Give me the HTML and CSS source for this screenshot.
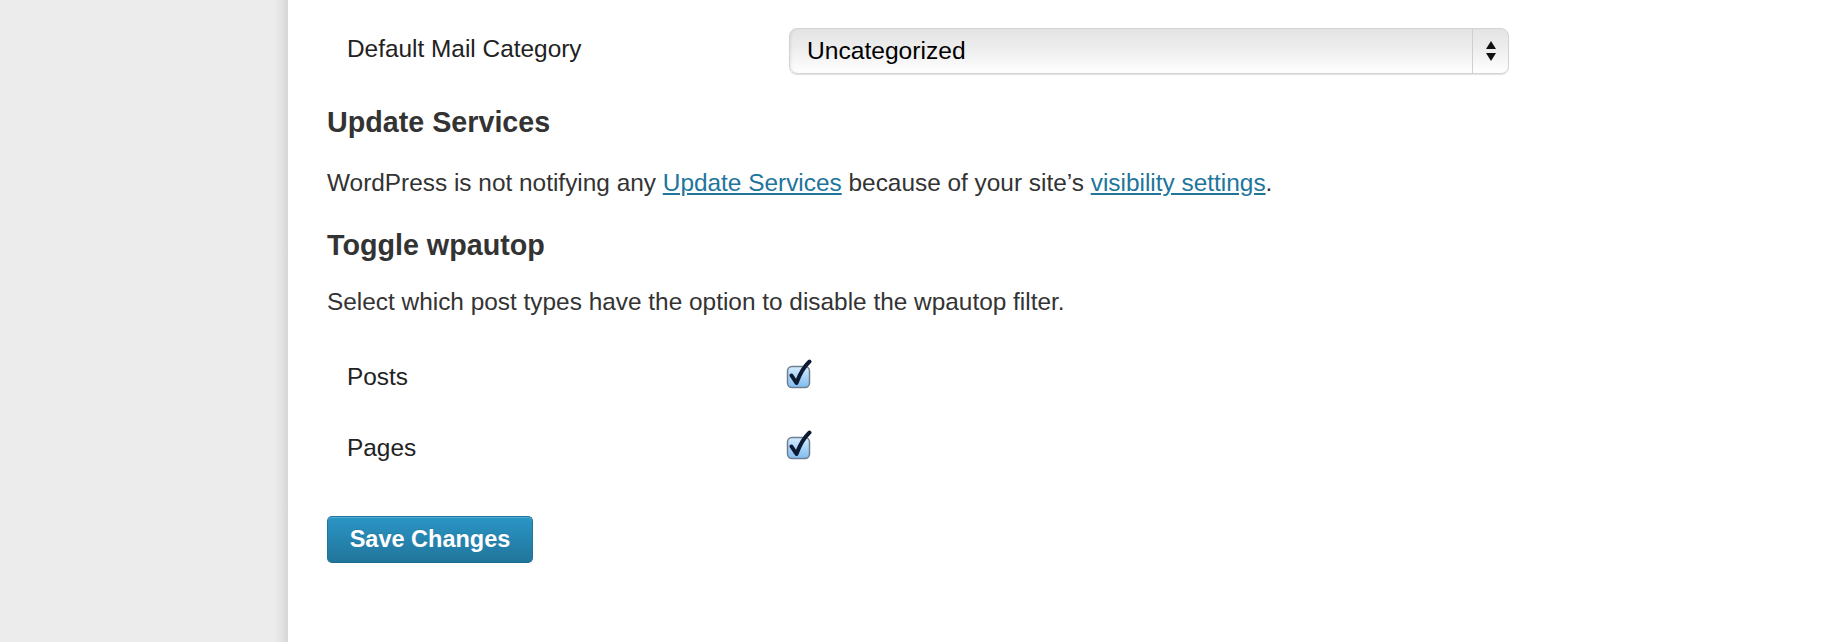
FILE: index.html
```html
<!DOCTYPE html>
<html>
<head>
<meta charset="utf-8">
<link rel="stylesheet" href="styles.css">
</head>
<body>
<div class="page">
  <div class="sidebar"></div>
  <div class="main">
    <div class="form-row first">
      <div class="label">Default Mail Category</div>
      <div class="field">
        <div class="select">
          <span class="select-value">Uncategorized</span>
          <span class="select-arrows">
            <svg width="12" height="22" viewBox="0 0 12 22"><path d="M6 1 L11 9 L1 9 Z M1 13 L11 13 L6 21 Z" fill="#111"/></svg>
          </span>
        </div>
      </div>
    </div>

    <h3 class="heading h-update">Update Services</h3>
    <p class="text p-update">WordPress is not notifying any <a href="#">Update Services</a> because of your site’s <a href="#">visibility settings</a>.</p>

    <h3 class="heading h-toggle">Toggle wpautop</h3>
    <p class="text p-toggle">Select which post types have the option to disable the wpautop filter.</p>

    <div class="form-row check-row posts">
      <div class="label">Posts</div>
      <div class="field">
        <svg class="checkbox" width="28" height="30" viewBox="0 0 28 30">
          <defs>
            <linearGradient id="cb" x1="0" y1="0" x2="0" y2="1">
              <stop offset="0" stop-color="#d6ecfd"/>
              <stop offset="0.5" stop-color="#a9d3f7"/>
              <stop offset="1" stop-color="#7fbcf0"/>
            </linearGradient>
          </defs>
          <rect x="1.5" y="7.5" width="22" height="21" rx="4.5" ry="4.5" fill="url(#cb)" stroke="#6f7f92" stroke-width="1.5"/>
          <path d="M5.5 16.5 L10.5 24 Q15.5 10 23.5 2.5" fill="none" stroke="#0c1a33" stroke-width="4" stroke-linecap="round" stroke-linejoin="round"/>
        </svg>
      </div>
    </div>

    <div class="form-row check-row pages">
      <div class="label">Pages</div>
      <div class="field">
        <svg class="checkbox" width="28" height="30" viewBox="0 0 28 30">
          <rect x="1.5" y="7.5" width="22" height="21" rx="4.5" ry="4.5" fill="url(#cb)" stroke="#6f7f92" stroke-width="1.5"/>
          <path d="M5.5 16.5 L10.5 24 Q15.5 10 23.5 2.5" fill="none" stroke="#0c1a33" stroke-width="4" stroke-linecap="round" stroke-linejoin="round"/>
        </svg>
      </div>
    </div>

    <div class="submit">
      <button class="button-primary" type="button">Save Changes</button>
    </div>
  </div>
</div>
</body>
</html>
```

FILE: styles.css
```css
html, body {
  margin: 0;
  padding: 0;
  background: #fff;
}
body {
  font-family: "Liberation Sans", Arial, Helvetica, sans-serif;
  color: #333;
  font-size: 24.4px;
}
.page {
  display: flex;
  width: 1836px;
  height: 642px;
  overflow: hidden;
}
.sidebar {
  width: 288px;
  flex: 0 0 288px;
  background: linear-gradient(to right, #ececec 0, #ececec 274px, #e3e3e3 281px, #d6d6d6 288px);
}
.main {
  flex: 1;
  padding-left: 39px;
  padding-top: 28px;
}
.form-row {
  display: grid;
  grid-template-columns: 459px 1fr;
  align-items: center;
}
.form-row .label {
  padding-left: 20px;
  color: #222;
  font-size: 24.4px;
  line-height: 30px;
}
.form-row.first {
  grid-template-columns: 462px 1fr;
  height: 46px;
}
.form-row.first .label {
  margin-top: -4px;
}
.select {
  width: 720px;
  height: 46px;
  box-sizing: border-box;
  border: 1px solid #d4d4d4;
  border-radius: 8px;
  background: linear-gradient(to bottom, #e4e4e4 0%, #ececec 40%, #f7f7f7 75%, #ffffff 100%);
  box-shadow: inset 2px 0 3px -1px rgba(0,0,0,0.08), 0 1px 1px rgba(0,0,0,0.12);
  display: flex;
  align-items: stretch;
}
.select-value {
  flex: 1;
  padding-left: 17px;
  display: flex;
  align-items: center;
  color: #000;
  font-size: 24.6px;
}
.select-arrows {
  width: 35px;
  border-left: 1px solid #cfcfcf;
  display: flex;
  align-items: center;
  justify-content: center;
}
.heading {
  margin: 0;
  font-size: 28.7px;
  line-height: 34px;
  font-weight: bold;
  color: #333;
}
.h-update {
  margin-top: 31px;
}
.text {
  margin: 0;
  font-size: 24.4px;
  line-height: 30px;
  color: #333;
}
.text a {
  color: #21759b;
  text-decoration: underline;
}
.p-update {
  margin-top: 29px;
}
.h-toggle {
  margin-top: 30px;
}
.p-toggle {
  margin-top: 25px;
}
.check-row {
  height: 46px;
}
.check-row .field {
  display: flex;
  align-items: center;
}
.checkbox {
  display: block;
  margin-top: -7px;
}
.posts {
  margin-top: 37px;
}
.pages {
  margin-top: 25px;
}
.submit {
  margin-top: 45px;
}
.button-primary {
  width: 206px;
  height: 47px;
  box-sizing: border-box;
  border: 1px solid #21759b;
  border-bottom-color: #1e6a8d;
  border-radius: 5px;
  background: linear-gradient(to bottom, #2a95c5 0%, #21759b 100%);
  box-shadow: inset 0 1px 0 rgba(120,200,230,0.5);
  color: #fff;
  font-family: "Liberation Sans", Arial, Helvetica, sans-serif;
  font-weight: bold;
  font-size: 23.5px;
  padding: 0;
  text-shadow: 0 -1px 0 rgba(0,0,0,0.1);
}
```
